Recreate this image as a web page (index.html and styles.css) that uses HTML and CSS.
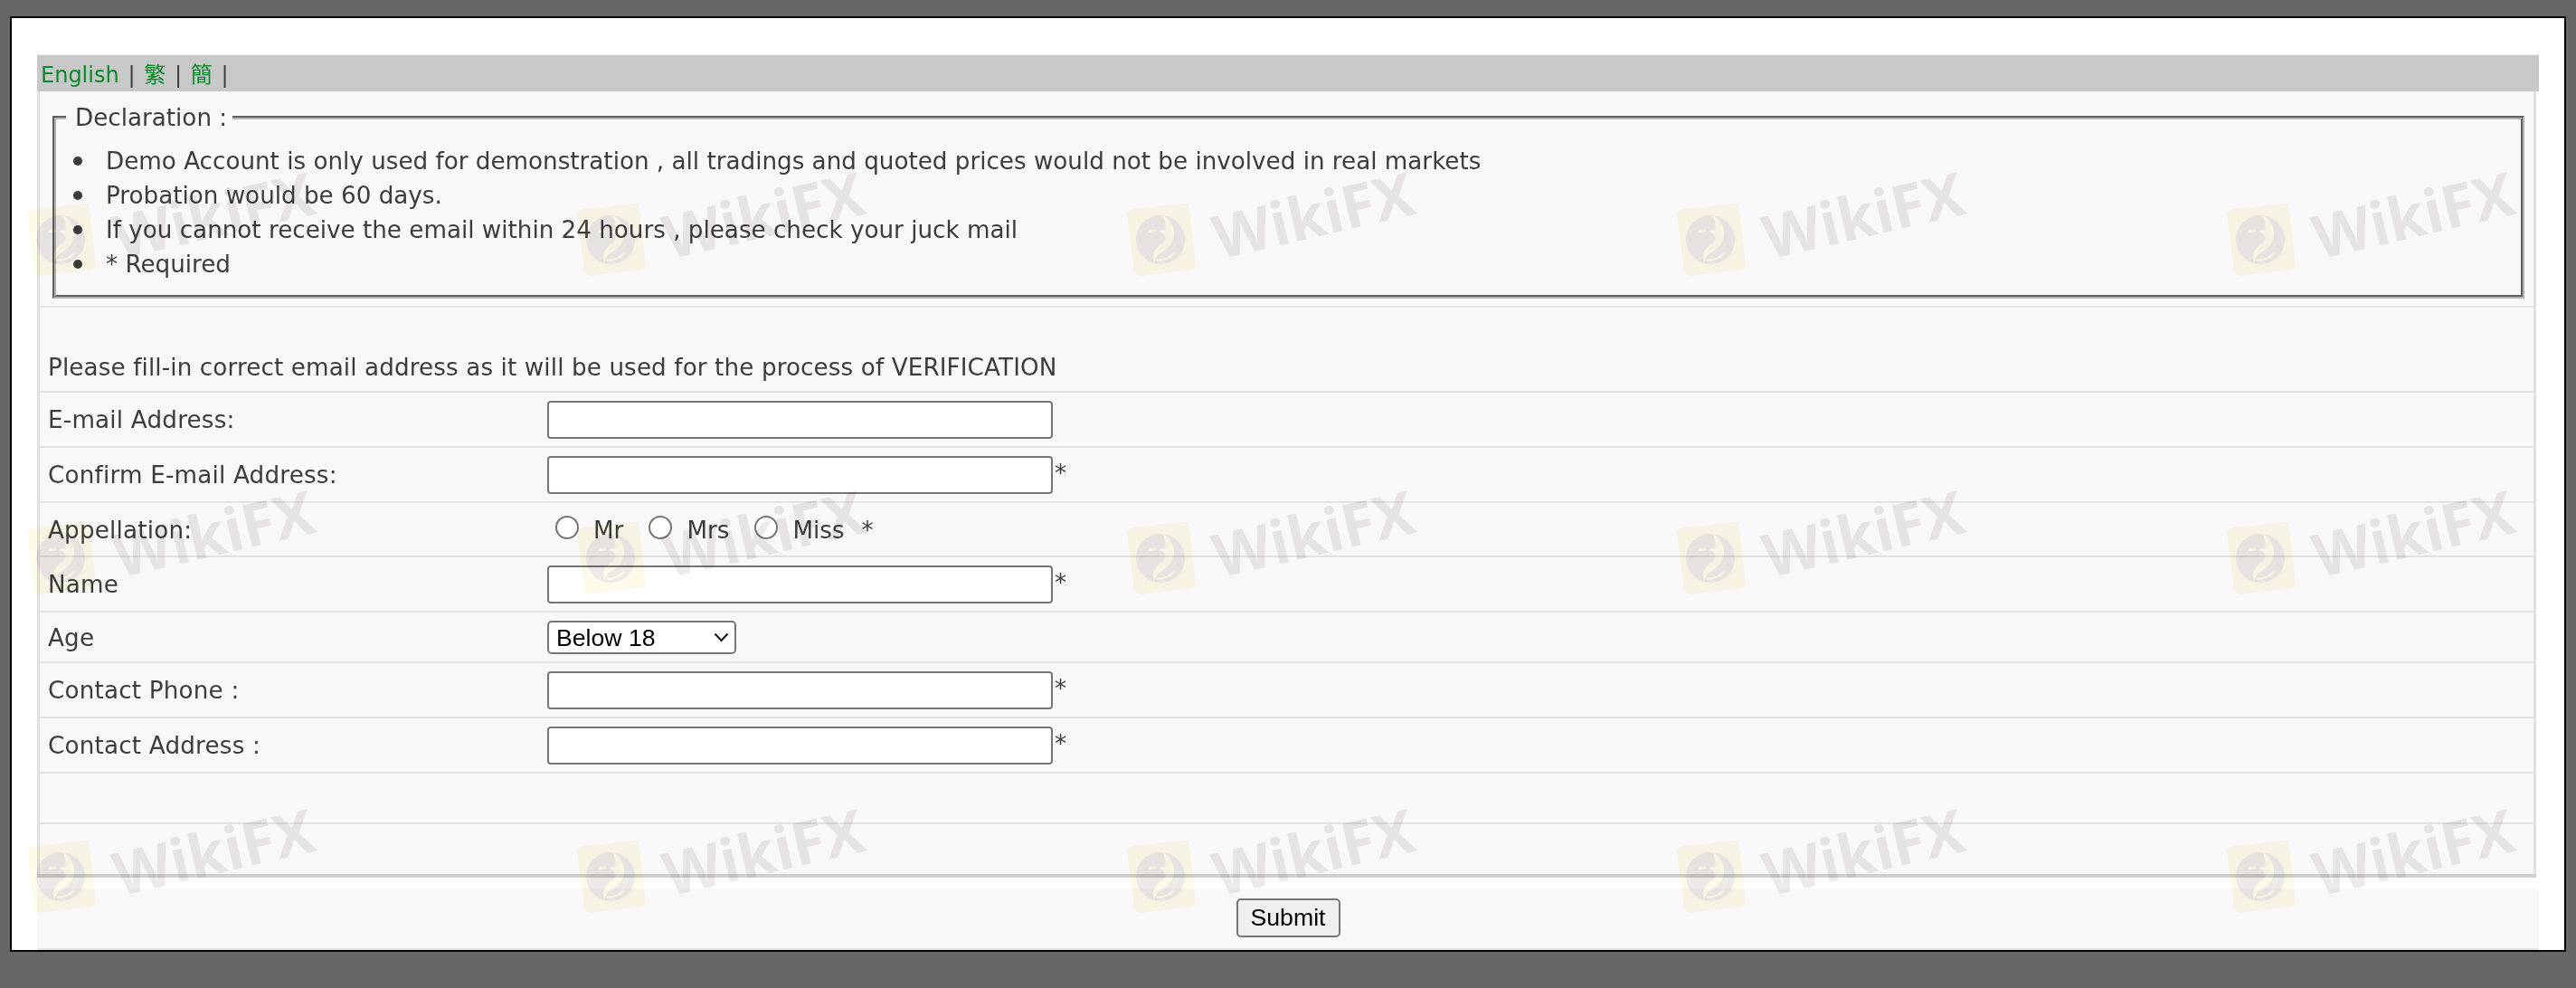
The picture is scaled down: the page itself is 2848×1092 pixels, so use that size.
FILE: index.html
```html
<!DOCTYPE html>
<html lang="en">
<head>
<meta charset="utf-8">
<title>Demo Account</title>
<link rel="stylesheet" href="styles.css">
</head>
<body>
<svg class="defs" width="0" height="0" aria-hidden="true">
  <symbol id="wf-logo" viewBox="0 0 80 80">
    <path class="wf-tile" d="M9 6 64 0q7-1 8 6l7 60q1 6-6 7L19 80q-7 1-8-6L3 13q-1-6 6-7z"/>
    <circle class="wf-bird" cx="40" cy="40" r="27"/>
    <path class="wf-swirl" d="M42 12C51 18 56 26 55 36 54 46 45 52 37 57l-4 8C30 56 34 49 41 45 46 41 47 37 43 33l-6-3 8 0C46 24 45 18 42 12z"/>
    <path class="wf-line" d="M36 63c8 0 14-3 19-8M27 31l8-1"/>
  </symbol>
</svg>
<main class="frame">
  <div class="panel">
    <nav class="langbar"><a class="lang" href="#">English</a> | <a class="lang" href="#">繁</a> | <a class="lang" href="#">簡</a> |</nav>
    <form class="sheet">
      <section class="row row-decl">
        <fieldset class="decl">
          <legend class="decl-title">Declaration :</legend>
          <ul class="decl-list">
            <li>Demo Account is only used for demonstration , all tradings and quoted prices would not be involved in real markets</li>
            <li>Probation would be 60 days.</li>
            <li>If you cannot receive the email within 24 hours , please check your juck mail</li>
            <li>* Required</li>
          </ul>
        </fieldset>
      </section>
      <p class="row row-intro">Please fill-in correct email address as it will be used for the process of VERIFICATION</p>
      <div class="row field"><label class="label">E-mail Address:</label><input class="text" type="text"></div>
      <div class="row field"><label class="label">Confirm E-mail Address:</label><input class="text" type="text"><span class="req">*</span></div>
      <div class="row field row-radio"><span class="label">Appellation:</span>
        <div class="radios">
          <label class="radio"><input type="radio" name="app">Mr</label>
          <label class="radio"><input type="radio" name="app">Mrs</label>
          <label class="radio"><input type="radio" name="app">Miss</label>
          <span class="radio-req">*</span>
        </div>
      </div>
      <div class="row field"><label class="label">Name</label><input class="text" type="text"><span class="req">*</span></div>
      <div class="row field"><label class="label">Age</label>
        <div class="select-wrap">
          <select class="select"><option>Below 18</option></select>
          <svg class="chevron" viewBox="0 0 17 11"><path d="M1.500 1.500 8.500 9l7-7.500"/></svg>
        </div>
      </div>
      <div class="row field"><label class="label">Contact Phone :</label><input class="text" type="text"><span class="req">*</span></div>
      <div class="row field"><label class="label">Contact Address :</label><input class="text" type="text"><span class="req">*</span></div>
      <div class="row row-empty"></div>
      <div class="row row-empty row-last"></div>
    </form>
    <div class="actions"><button class="submit" type="button">Submit</button></div>
  </div>
</main>
<div class="marks" aria-hidden="true">
  <div class="mark"><svg class="mark-logo"><use href="#wf-logo"/></svg><span class="mark-text">WikiFX</span></div>
  <div class="mark"><svg class="mark-logo"><use href="#wf-logo"/></svg><span class="mark-text">WikiFX</span></div>
  <div class="mark"><svg class="mark-logo"><use href="#wf-logo"/></svg><span class="mark-text">WikiFX</span></div>
  <div class="mark"><svg class="mark-logo"><use href="#wf-logo"/></svg><span class="mark-text">WikiFX</span></div>
  <div class="mark"><svg class="mark-logo"><use href="#wf-logo"/></svg><span class="mark-text">WikiFX</span></div>
  <div class="mark"><svg class="mark-logo"><use href="#wf-logo"/></svg><span class="mark-text">WikiFX</span></div>
  <div class="mark"><svg class="mark-logo"><use href="#wf-logo"/></svg><span class="mark-text">WikiFX</span></div>
  <div class="mark"><svg class="mark-logo"><use href="#wf-logo"/></svg><span class="mark-text">WikiFX</span></div>
  <div class="mark"><svg class="mark-logo"><use href="#wf-logo"/></svg><span class="mark-text">WikiFX</span></div>
  <div class="mark"><svg class="mark-logo"><use href="#wf-logo"/></svg><span class="mark-text">WikiFX</span></div>
  <div class="mark"><svg class="mark-logo"><use href="#wf-logo"/></svg><span class="mark-text">WikiFX</span></div>
  <div class="mark"><svg class="mark-logo"><use href="#wf-logo"/></svg><span class="mark-text">WikiFX</span></div>
  <div class="mark"><svg class="mark-logo"><use href="#wf-logo"/></svg><span class="mark-text">WikiFX</span></div>
  <div class="mark"><svg class="mark-logo"><use href="#wf-logo"/></svg><span class="mark-text">WikiFX</span></div>
  <div class="mark"><svg class="mark-logo"><use href="#wf-logo"/></svg><span class="mark-text">WikiFX</span></div>
</div>
</body>
</html>
```
FILE: styles.css
```css
* { box-sizing: border-box; }
html, body { margin: 0; height: 100%; }
body {
  position: relative;
  height: 1092px;
  overflow: hidden;
  background: #666;
  padding: 18px 11px 40px;
  font-family: "DejaVu Sans", Verdana, sans-serif;
  font-size: 26.2px;
  color: #3c3c3c;
}
.defs { position: absolute; }
.frame {
  height: 1034px;
  background: #fff;
  border: 2px solid #000;
  padding: 40px 28px 0 28px;
  overflow: hidden;
}
.panel { display: flex; flex-direction: column; }
.langbar {
  height: 41px;
  background: #c8c8c8;
  border-top: 1px solid #eee;
  padding: 0 0 0 4px;
  font-size: 24px;
  line-height: 44px;
  word-spacing: 2.100px;
  white-space: pre-wrap;
  font-family: "DejaVu Sans", "Noto Sans CJK TC", sans-serif;
}
.lang { color: #0a8a2a; text-decoration: none; }
.sheet {
  display: flex;
  flex-direction: column;
  margin-right: 3px;
  background: #f8f8f8;
  border-left: 3px solid #e0e0e0;
  border-right: 3px solid #e0e0e0;
}
.row { margin: 0; border-bottom: 2px solid #e2e2e2; }
.row-decl { height: 239px; padding: 15px 10px 0 14px; }
.decl {
  margin: 0;
  height: 214px;
  padding: 0;
  border: 4px groove #b4b4b4;
  min-width: 0;
}
.decl-title { margin-left: 11px; padding: 0 6px 0 10px; line-height: 28px; font-size: 26.2px; }
.decl-list { margin: 15px 0 0; padding: 0 0 0 55px; list-style: none; line-height: 38px; }
.decl-list li { position: relative; }
.decl-list li::before {
  content: "";
  position: absolute;
  left: -36px;
  top: 14px;
  width: 10px;
  height: 10px;
  border-radius: 50%;
  background: #3c3c3c;
}
.row-intro { height: 94px; padding: 46px 0 0 9px; line-height: 40px; letter-spacing: 0.120px; }
.field { display: flex; align-items: center; padding: 9px 0 8px 9px; }
.label { flex: 0 0 552px; letter-spacing: 0.200px; }
.text {
  width: 559px;
  height: 42px;
  padding: 0 6px;
  background: #fff;
  border: 2px solid #767676;
  border-radius: 4px;
}
.req { margin-left: 2px; align-self: flex-start; line-height: 38px; }
.row-radio { height: 60px; }
.radios { display: flex; align-items: center; padding-left: 9px; }
.radio { display: flex; align-items: center; margin-right: 28px; }
.radio input {
  appearance: none;
  width: 26px;
  height: 26px;
  margin: -6px 16px 0 0;
  background: #fff;
  border: 2px solid #767676;
  border-radius: 50%;
}
.radio-req { margin-left: -9px; }
.select-wrap { position: relative; }
.select {
  display: block;
  appearance: none;
  width: 209px;
  height: 37px;
  padding: 0 8px;
  background: #fff;
  color: #000;
  border: 2px solid #767676;
  border-radius: 5px;
  font-family: "Liberation Sans", Arial, sans-serif;
  font-size: 26.670px;
}
.chevron {
  position: absolute;
  top: 13px;
  right: 8px;
  width: 17px;
  height: 11px;
  fill: none;
  stroke: #111;
  stroke-width: 2;
}
.row-empty { height: 56px; }
.row-last {
  height: 59px;
  border-bottom: 4px solid #d0d0d0;
  margin: 0 -3px;
  padding: 0 3px;
  box-shadow: inset 3px 0 #e0e0e0, inset -3px 0 #e0e0e0;
}
.actions {
  display: flex;
  justify-content: center;
  margin-top: 12px;
  height: 68px;
  padding-top: 11px;
  background: #f8f8f8;
  border-bottom: 2px solid #e6e6e6;
}
.submit {
  width: 115px;
  height: 43px;
  padding: 0;
  background: #efefef;
  color: #000;
  border: 2px solid #767676;
  border-radius: 5px;
  font-family: "Liberation Sans", Arial, sans-serif;
  font-size: 26.670px;
}
.marks {
  position: absolute;
  left: 27px;
  top: 140px;
  right: 0;
  bottom: 0;
  overflow: hidden;
  display: grid;
  grid-template-columns: repeat(4, 608px) 1fr;
  grid-template-rows: 352px 352px 1fr;
  pointer-events: none;
  mix-blend-mode: multiply;
}
.mark { position: relative; }
.mark-logo { position: absolute; left: 0; top: 85px; width: 80px; height: 80px; }
.wf-tile { fill: #fefae9; }
.wf-bird { fill: #ece9e7; }
.wf-swirl { fill: #fefae9; }
.wf-line { fill: none; stroke: #fefae9; stroke-width: 2.500; }
.mark-text {
  position: absolute;
  left: 96px;
  top: 54px;
  font-family: "Open Sans", sans-serif;
  font-weight: 700;
  font-size: 66px;
  line-height: 84px;
  color: #eeeae9;
  transform: rotate(-13deg);
}
```
